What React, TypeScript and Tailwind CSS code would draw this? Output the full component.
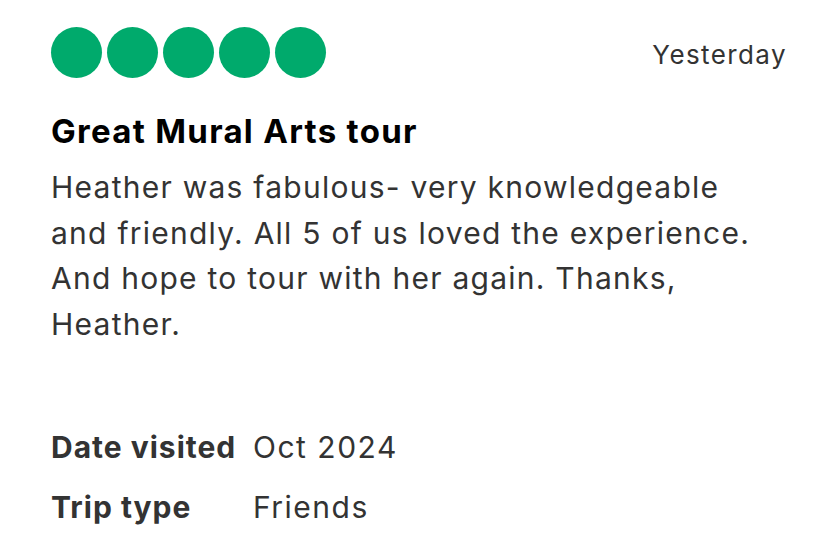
import React from 'react';

export default function App() {
  const details = [
    { label: 'Date visited', value: 'Oct 2024' },
    { label: 'Trip type', value: 'Friends' },
  ];
  const lines = [
    'Heather was fabulous- very knowledgeable',
    'and friendly. All 5 of us loved the experience.',
    'And hope to tour with her again. Thanks,',
    'Heather.',
  ];

  return (
    <div className="w-[840px] h-[540px] bg-white overflow-hidden text-[#333333]" style={{ fontFamily: 'Inter, "Noto Sans", sans-serif' }}>
      <div className="pl-[51px] pr-[53px] pt-[27px]">
        {/* rating + date */}
        <div className="flex items-start justify-between">
          <div className="flex gap-[5px]">
            {[0, 1, 2, 3, 4].map((i) => (
              <span key={i} className="block w-[51px] h-[51px] rounded-full bg-[#00aa6c]" />
            ))}
          </div>
          <span className="text-[26px] leading-none mt-[15px] tracking-[1.4px] text-[#333333]">Yesterday</span>
        </div>

        <h1 className="mt-[33px] text-[33px] leading-[40px] font-bold text-black tracking-[1.3px]">Great Mural Arts tour</h1>

        <div className="mt-[14px] text-[30px] leading-[45.5px] tracking-[1.25px] text-[#333333]">
          {lines.map((l) => (
            <div key={l} className="whitespace-nowrap">{l}</div>
          ))}
        </div>

        <div className="mt-[80px] flex flex-col gap-[20px]">
          {details.map((d) => (
            <div key={d.label} className="flex text-[30px] leading-[40px]">
              <span className="w-[202px] font-bold tracking-[1px] text-[#333333]">{d.label}</span>
              <span className="tracking-[1.5px]">{d.value}</span>
            </div>
          ))}
        </div>
      </div>
    </div>
  );
}
